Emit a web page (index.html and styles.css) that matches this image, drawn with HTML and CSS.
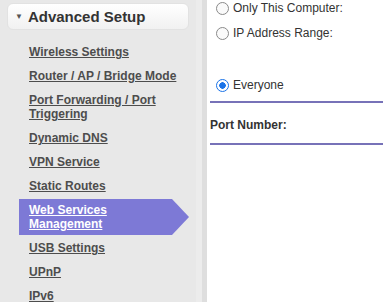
FILE: index.html
```html
<!DOCTYPE html>
<html lang="en">
<head>
    <meta charset="UTF-8">
    <title>Advanced Setup</title>
    <link rel="stylesheet" href="styles.css">
</head>
<body>
    <div class="page">
        <div class="sidebar">
            <div class="menu-head">
                <span class="caret">&#9660;</span>
                <span>Advanced Setup</span>
            </div>
            <ul class="menu">
                <li><a href="#">Wireless Settings</a></li>
                <li><a href="#">Router / AP / Bridge Mode</a></li>
                <li><a href="#">Port Forwarding / Port<br>Triggering</a></li>
                <li><a href="#">Dynamic DNS</a></li>
                <li><a href="#">VPN Service</a></li>
                <li><a href="#">Static Routes</a></li>
                <li class="active"><a href="#">Web Services<br>Management</a></li>
                <li><a href="#">USB Settings</a></li>
                <li><a href="#">UPnP</a></li>
                <li><a href="#">IPv6</a></li>
            </ul>
        </div>
        <div class="divider"></div>
        <div class="content">
            <label class="radio-row"><span class="radio"></span>Only This Computer:</label>
            <label class="radio-row second"><span class="radio"></span>IP Address Range:</label>
            <label class="radio-row everyone"><span class="radio checked"></span>Everyone</label>
            <div class="rule"></div>
            <div class="field-label">Port Number:</div>
            <div class="rule"></div>
        </div>
    </div>
</body>
</html>
```

FILE: styles.css
```css
body {
    margin: 0;
    font-family: "Liberation Sans", Arial, sans-serif;
    background-color: #ffffff;
}

.page {
    display: flex;
    height: 302px;
    overflow: hidden;
}

.sidebar {
    width: 196px;
    background-color: #e8e8e8;
    padding-top: 3px;
}

.divider {
    width: 11px;
    background: linear-gradient(to right, #ececec 0, #ececec 6px, #dedede 6px, #dedede 11px);
}

.menu-head {
    margin-left: 7px;
    width: 182px;
    height: 27px;
    box-sizing: border-box;
    border-radius: 6px;
    background: linear-gradient(to bottom, #ffffff, #f1f1f1);
    border: 1px solid #e2e2e2;
    display: flex;
    align-items: center;
    font-size: 15px;
    font-weight: bold;
    color: #333333;
}

.caret {
    font-size: 8px;
    color: #555555;
    margin-left: 7px;
    margin-right: 5px;
}

.menu {
    list-style: none;
    margin: 0;
    padding: 15px 0 0 0;
}

.menu li {
    padding: 0 0 10px 29px;
    font-size: 12px;
    line-height: 14px;
    font-weight: bold;
}

.menu a {
    color: #4d4d4d;
}

.menu li.active {
    margin-left: 19px;
    padding: 4px 0 4px 10px;
    width: 160px;
    margin-bottom: 6px;
    margin-top: -4px;
    background-color: #7d79d6;
    clip-path: polygon(0 0, 153px 0, 100% 50%, 153px 100%, 0 100%);
}

.menu li.active a {
    color: #ffffff;
}

.content {
    flex: 1;
    padding-left: 3px;
    padding-top: 1px;
    font-size: 12px;
    color: #333333;
}

.radio-row {
    display: flex;
    align-items: center;
    height: 14px;
    margin-left: 6px;
}

.radio-row.second {
    margin-top: 11px;
}

.radio-row.everyone {
    margin-top: 38px;
}

.radio {
    width: 11px;
    height: 11px;
    border: 1px solid #8a8a8a;
    border-radius: 50%;
    margin-right: 4px;
    background: #fafafa;
    box-sizing: content-box;
}

.radio.checked {
    border-color: #1a73e8;
    background: radial-gradient(circle, #1a73e8 0, #1a73e8 3px, #ffffff 3.5px);
}

.rule {
    height: 2px;
    background-color: #7772b8;
    margin-top: 9px;
}

.field-label {
    font-weight: bold;
    margin-top: 15px;
    margin-bottom: 11px;
    line-height: 14px;
}
```
